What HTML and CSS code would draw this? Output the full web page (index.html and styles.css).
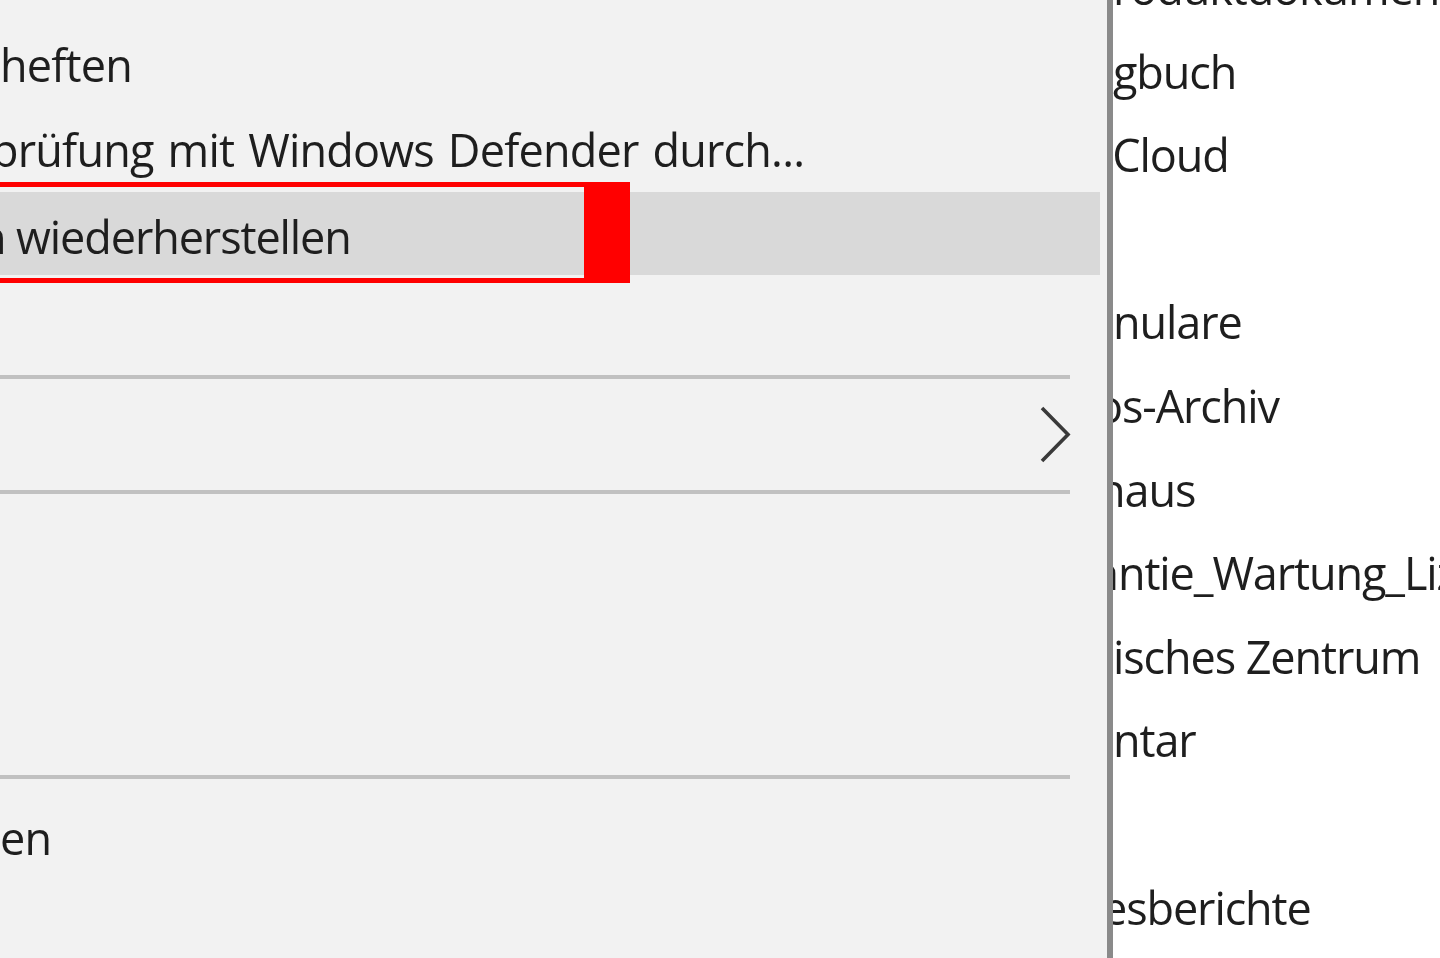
FILE: index.html
```html
<!DOCTYPE html>
<html lang="de">
<head>
<meta charset="utf-8">
<title>Kontextmenü</title>
<link rel="stylesheet" href="styles.css">
</head>
<body>
<div class="screen">
  <div class="menu">
    <div class="item"><span class="label">heften</span></div>
    <div class="item"><span class="label cut-p">prüfung mit Windows Defender durch...</span></div>
    <div class="item hover">
      <span class="label cut-n">n wiederherstellen</span>
      <span class="mark"></span>
    </div>
    <div class="item"></div>
    <div class="sep"></div>
    <div class="item sub">
      <span class="label"></span>
      <svg class="chev" viewBox="0 0 34 60" width="34" height="60"><path d="M4 3 L30 29.5 L4 56" fill="none" stroke="#3a3a3a" stroke-width="3.6"/></svg>
    </div>
    <div class="sep"></div>
    <div class="item"></div>
    <div class="item"></div>
    <div class="item"></div>
    <div class="sep"></div>
    <div class="item"><span class="label">en</span></div>
    <div class="item"></div>
  </div>
  <div class="divider"></div>
  <div class="panel">
    <div class="list">
      <div class="row"><span>roduktdokumentation</span></div>
      <div class="row"><span>gbuch</span></div>
      <div class="row"><span class="c-i">iCloud</span></div>
      <div class="row"></div>
      <div class="row"><span>nulare</span></div>
      <div class="row"><span class="c-o">os-Archiv</span></div>
      <div class="row"><span class="c-h">haus</span></div>
      <div class="row"><span class="c-a">antie_Wartung_Lizenzen</span></div>
      <div class="row"><span>isches Zentrum</span></div>
      <div class="row"><span>ntar</span></div>
      <div class="row"></div>
      <div class="row"><span class="c-e">esberichte</span></div>
    </div>
  </div>
</div>
</body>
</html>
```

FILE: styles.css
```css
html, body {
  margin: 0;
  padding: 0;
  height: 100%;
}
body {
  background: #f2f2f2;
  font-family: "Open Sans", "Noto Sans", "Liberation Sans", sans-serif;
  color: #1e1e1e;
  overflow: hidden;
}
.screen {
  display: flex;
  width: 1440px;
  height: 958px;
  overflow: hidden;
}
.menu {
  width: 1107px;
  flex: none;
  background: #f2f2f2;
  padding-top: 19px;
  box-sizing: border-box;
  overflow: hidden;
}
.item {
  position: relative;
  height: 85px;
  width: 1100px;
  display: flex;
  align-items: center;
  font-size: 45px;
  letter-spacing: -0.8px;
  word-spacing: 3px;
  white-space: nowrap;
}
.item .label {
  display: block;
  line-height: 85px;
  padding-top: 6px;
  filter: blur(0.4px);
}
.cut-p { margin-left: -9px; }
.cut-n { margin-left: -21px; word-spacing: 0; letter-spacing: -1.1px; }
.item.hover {
  background: #d9d9d9;
  height: 83px;
  margin-top: 3px;
  margin-bottom: 2px;
}
.mark {
  position: absolute;
  left: -10px;
  top: -10px;
  width: 589px;
  height: 91px;
  border: 5px solid #ff0000;
  border-right-width: 46px;
  box-sizing: content-box;
  pointer-events: none;
}
.sep {
  height: 30px;
  width: 1070px;
  display: flex;
  align-items: center;
}
.sep::before {
  content: "";
  display: block;
  width: 100%;
  height: 4px;
  background: #c1c1c1;
}
.item.sub {
  justify-content: space-between;
}
.chev {
  margin-right: 28px;
  display: block;
}
.divider {
  width: 6px;
  flex: none;
  background: #8a8a8a;
}
.panel {
  flex: 1;
  background: #ffffff;
  overflow: hidden;
}
.list {
  margin-top: -54px;
}
.row {
  height: 83.6px;
  display: flex;
  align-items: center;
  font-size: 45px;
  letter-spacing: -1.1px;
  white-space: nowrap;
}
.row span {
  line-height: 83.6px;
  display: block;
  filter: blur(0.4px);
}
.c-i { margin-left: -11px; }
.c-o { margin-left: -17px; }
.c-h { margin-left: -15px; }
.c-a { margin-left: -19px; }
.c-e { margin-left: -11px; }
```
